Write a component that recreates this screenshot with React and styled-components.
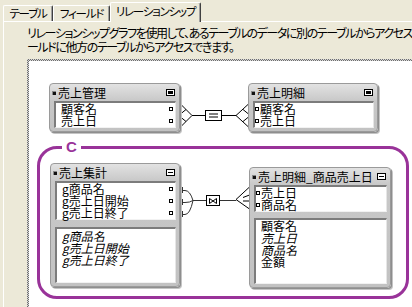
import React from "react";
import styled, { createGlobalStyle } from "styled-components";

const GlobalStyle = createGlobalStyle`
  html, body {
    margin: 0;
    padding: 0;
    background: #ece9d8;
  }
  body {
    font-family: "Noto Sans CJK JP", "Noto Sans", sans-serif;
    font-size: 12px;
    color: #000;
  }
`;

const Screen = styled.div`
  width: 412px;
  height: 307px;
  overflow: hidden;
  background: #ece9d8;
`;

const TabBar = styled.div`
  display: flex;
  align-items: flex-end;
  height: 21px;
  padding-left: 3px;
  position: relative;
  z-index: 1;
`;

const Tab = styled.div`
  box-sizing: border-box;
  flex: 0 0 ${(p) => p.$w}px;
  height: ${(p) => (p.$active ? 20 : 16)}px;
  margin-bottom: ${(p) => (p.$active ? -1 : 0)}px;
  border: 1px solid;
  border-color: #fff #404040 transparent #fff;
  border-bottom: none;
  box-shadow: inset -1px 0 #a0a0a0;
  border-radius: 2px 2px 0 0;
  background: #ece9d8;
  text-align: center;
  font-size: 11.5px;
  line-height: ${(p) => (p.$active ? 17 : 15)}px;
  white-space: nowrap;
  overflow: hidden;
  letter-spacing: -1.2px;
  font-feature-settings: "palt";
`;

const Panel = styled.div`
  width: 700px;
  margin-left: 3px;
  border-top: 1px solid #fff;
  border-left: 1px solid #fff;
  padding: 4px 0 0 23px;
`;

const Intro = styled.div`
  line-height: 14px;
  white-space: nowrap;
  letter-spacing: -1.4px;
  font-feature-settings: "palt";
`;

const CanvasFrame = styled.div`
  margin-top: 5px;
  padding: 2px 0 0 2px;
  background: repeating-conic-gradient(#6e6e6e 0 25%, #d8d8d8 0 50%) 0 0 / 2px 2px;
`;

const Canvas = styled.div`
  position: relative;
  height: 260px;
  background: #fff;
`;

const Wires = styled.svg`
  position: absolute;
  left: 0;
  top: 0;
`;

const Group = styled.div`
  position: absolute;
  left: 8px;
  top: 85px;
  width: 372px;
  height: 153px;
  box-sizing: border-box;
  border: 3px solid #993399;
  border-radius: 20px;
`;

const GroupLabel = styled.span`
  position: absolute;
  left: 22px;
  top: -11px;
  padding: 0 4px;
  background: #fff;
  color: #993399;
  font-family: "Liberation Sans", Arial, sans-serif;
  font-weight: bold;
  font-size: 15px;
  line-height: 18px;
`;

const Node = styled.div`
  position: absolute;
  left: ${(p) => p.$x}px;
  top: ${(p) => p.$y}px;
  width: ${(p) => p.$w}px;
  box-sizing: border-box;
  padding: 0 3px 3px 4px;
  border: 1px solid #9a9a9a;
  border-radius: 4px;
  background: linear-gradient(#e2e2e2, #c8c8c8 17px, #c2c2c2);
  box-shadow: 1px 1px 0 #8e8e8e, 2px 2px 0 #c4c4c4;
`;

const Header = styled.div`
  display: flex;
  align-items: center;
  height: 17px;
  margin-left: -2px;
  white-space: nowrap;
`;

const NodeIcon = styled.span`
  flex: 0 0 auto;
  width: 4px;
  height: 4px;
  margin-right: 2px;
  background: #111;
  box-shadow: inset 1px 1px 0 #888;
`;

const Title = styled.span`
  flex: 1;
  line-height: 17px;
`;

const MinButton = styled.span`
  flex: 0 0 auto;
  position: relative;
  box-sizing: border-box;
  width: 9px;
  height: 7px;
  margin-right: 1px;
  border: 1px solid #000;
  background: #fff;

  &::after {
    content: "";
    position: absolute;
    left: 1px;
    right: 1px;
    top: ${(p) => (p.$solid ? 1 : 2)}px;
    height: ${(p) => (p.$solid ? 3 : 1)}px;
    background: #000;
  }
`;

const Pane = styled.div`
  box-sizing: border-box;
  min-height: ${(p) => p.$minH || 0}px;
  margin-top: ${(p) => p.$gap || 0}px;
  padding-top: ${(p) => p.$pad || 0}px;
  background: #fff;
  border-top: 2px solid #7c7c7c;
  border-left: 2px solid #7c7c7c;
  border-right: 1px solid #e6e6e6;
  border-bottom: 1px solid #f2f2f2;
`;

const Field = styled.div`
  display: flex;
  align-items: center;
  height: 12px;
  line-height: 12px;
  padding-left: ${(p) => (p.$dot === "left" ? 0 : 5)}px;
  padding-right: 2px;
  font-style: ${(p) => (p.$italic ? "italic" : "normal")};
  white-space: nowrap;
`;

const FieldName = styled.span`
  flex: 1;
`;

const Dot = styled.span`
  flex: 0 0 auto;
  box-sizing: border-box;
  width: 4px;
  height: 4px;
  margin-right: ${(p) => (p.$left ? 1 : 0)}px;
  border: 1px solid #000;
`;

const tables = [
  {
    x: 20, y: 22, w: 131, title: "売上管理", solid: true,
    panes: [{ pad: 0, fields: [{ n: "顧客名", dot: "right" }, { n: "売上日", dot: "right" }] }],
  },
  {
    x: 219, y: 22, w: 130, title: "売上明細", solid: true,
    panes: [{ pad: 0, fields: [{ n: "顧客名", dot: "left" }, { n: "売上日", dot: "left" }] }],
  },
  {
    x: 21, y: 102, w: 130, title: "売上集計",
    panes: [
      { pad: 0, fields: [{ n: "g商品名", dot: "right" }, { n: "g売上日開始", dot: "right" }, { n: "g売上日終了", dot: "right" }] },
      { pad: 1, gap: 7, minH: 56, fields: [{ n: "g商品名", i: true }, { n: "g売上日開始", i: true }, { n: "g売上日終了", i: true }] },
    ],
  },
  {
    x: 220, y: 106, w: 142, title: "売上明細_商品売上日",
    panes: [
      { pad: 0, fields: [{ n: "売上日", dot: "left" }, { n: "商品名", dot: "left" }] },
      { pad: 0, gap: 6, minH: 66, fields: [{ n: "顧客名" }, { n: "売上日", i: true }, { n: "商品名", i: true }, { n: "金額" }] },
    ],
  },
];

const TableNode = ({ t }) => (
  <Node $x={t.x} $y={t.y} $w={t.w}>
    <Header>
      <NodeIcon />
      <Title>{t.title}</Title>
      <MinButton $solid={t.solid} />
    </Header>
    {t.panes.map((p, i) => (
      <Pane key={i} $pad={p.pad} $gap={p.gap} $minH={p.minH}>
        {p.fields.map((f) => (
          <Field key={f.n} $dot={f.dot} $italic={f.i}>
            {f.dot === "left" && <Dot $left />}
            <FieldName>{f.n}</FieldName>
            {f.dot === "right" && <Dot />}
          </Field>
        ))}
      </Pane>
    ))}
  </Node>
);

// connector drawing, in page coordinates (canvas origin is 29,61)
const Connectors = () => (
  <Wires width="412" height="260" viewBox="29 61 412 260" fill="none" stroke="#000" strokeWidth="1">
    {/* 売上管理 = 売上明細 */}
    <path d="M180.5 104L192 115.5L180.5 127M180.5 114L186 109.5M180.5 117L186 121.5" />
    <path d="M192 115.5H205.5M222 115.5H236" />
    <rect x="205.5" y="110.5" width="16" height="10" />
    <path d="M209 114H218M209 117H218" />
    <path d="M248.5 104L236 115.5L248.5 127M248.5 114L243 109.5M248.5 117L243 121.5" />

    {/* 売上集計 ⋈ 売上明細_商品売上日 */}
    <path d="M182.5 187V193M182.5 199V205M182.5 211V217" stroke="#333" />
    <path d="M180 190.5H185Q190 190.5 193 200.5M180 202.5H185Q190 202.5 193 200.5M180 214.5H185Q190 214.5 193 200.5" stroke="#333" />
    <path d="M193 200.5H206.5M219 200.5H236" stroke="#333" />
    <rect x="206.5" y="195.5" width="13" height="10" />
    <path d="M209.5 198.5V203.5L216.5 198.5V203.5L209.5 198.5" />
    <path d="M249.5 187L236 199.5L249.5 209M249.5 195L243 197.5M249.5 201L243 201" />
  </Wires>
);

export default function App() {
  return (
    <Screen>
      <GlobalStyle />
      <TabBar>
        <Tab $w={50}>テーブル</Tab>
        <Tab $w={57}>フィールド</Tab>
        <Tab $w={91} $active>リレーションシップ</Tab>
      </TabBar>
      <Panel>
        <Intro>リレーションシップグラフを使用して、あるテーブルのデータに別のテーブルからアクセスできるようにすると、一方のテーブルのフィ</Intro>
        <Intro>ールドに他方のテーブルからアクセスできます。</Intro>
        <CanvasFrame>
          <Canvas>
            <Group>
              <GroupLabel>C</GroupLabel>
            </Group>
            <Connectors />
            {tables.map((t) => (
              <TableNode key={t.title} t={t} />
            ))}
          </Canvas>
        </CanvasFrame>
      </Panel>
    </Screen>
  );
}
